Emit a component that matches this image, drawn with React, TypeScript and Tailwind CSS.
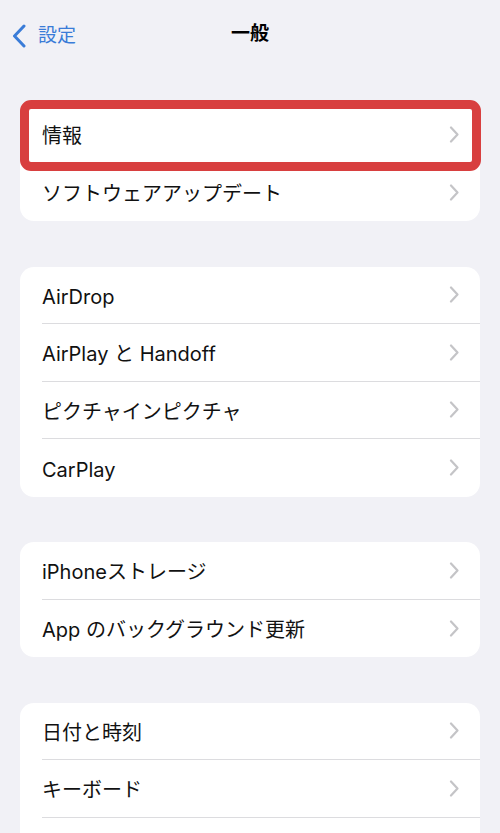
import type { ReactNode } from 'react';

const FONT = 'font-["Inter","Noto_Sans_CJK_JP",sans-serif]';

const GROUPS: string[][] = [
    ['情報', 'ソフトウェアアップデート'],
    ['AirDrop', 'AirPlay と Handoff', 'ピクチャインピクチャ', 'CarPlay'],
    ['iPhoneストレージ', 'App のバックグラウンド更新'],
    ['日付と時刻', 'キーボード', ''],
];

function Chevron() {
    return (
        <svg width="11" height="17" viewBox="0 0 11 17" fill="none" className="shrink-0">
            <path
                d="M2 1.5 L8.5 8.5 L2 15.5"
                stroke="#c4c4c7"
                strokeWidth="2.2"
                strokeLinecap="round"
                strokeLinejoin="round"
            />
        </svg>
    );
}

function Row({ label, last }: { label: string; last: boolean }) {
    return (
        <div className="flex h-[57.5px] items-center pl-[22px]">
            <div
                className={`flex h-full flex-1 items-center justify-between pr-[20px] ${
                    last ? '' : 'border-b border-[#dcdcdf]'
                }`}
            >
                <span className="pt-[4px] text-[20px] text-[#111]">{label}</span>
                {label && <Chevron />}
            </div>
        </div>
    );
}

function Card({ items, children }: { items: string[]; children?: ReactNode }) {
    return (
        <div className="relative mx-5 rounded-[14px] bg-white">
            {items.map((label, i) => (
                <Row key={i} label={label} last={i === items.length - 1} />
            ))}
            {children}
        </div>
    );
}

export default function App() {
    return (
        <div className={`h-[833px] w-[500px] overflow-hidden bg-[#f1f1f6] ${FONT}`}>
            {/* nav bar */}
            <div className="relative flex h-[68px] items-center justify-center">
                <div className="absolute left-[11px] top-[22px] flex items-center gap-[11px]">
                    <svg width="16" height="24" viewBox="0 0 16 24" fill="none">
                        <path
                            d="M13 2 L3.5 12 L13 22"
                            stroke="#3a7cd8"
                            strokeWidth="3"
                            strokeLinecap="round"
                            strokeLinejoin="round"
                        />
                    </svg>
                    <span className="text-[19px] text-[#3a7cd8]">設定</span>
                </div>
                <span className="text-[19px] font-bold text-black">一般</span>
            </div>

            <div className="mt-[38px] flex flex-col gap-[45.5px]">
                <Card items={GROUPS[0]}>
                    {/* highlight around the first row */}
                    <div className="pointer-events-none absolute -top-[6px] left-0 h-[71px] w-[461px] rounded-[11px] border-[9.5px] border-[#d83f3f]" />
                </Card>
                <Card items={GROUPS[1]} />
                <Card items={GROUPS[2]} />
                <Card items={GROUPS[3]} />
            </div>
        </div>
    );
}
